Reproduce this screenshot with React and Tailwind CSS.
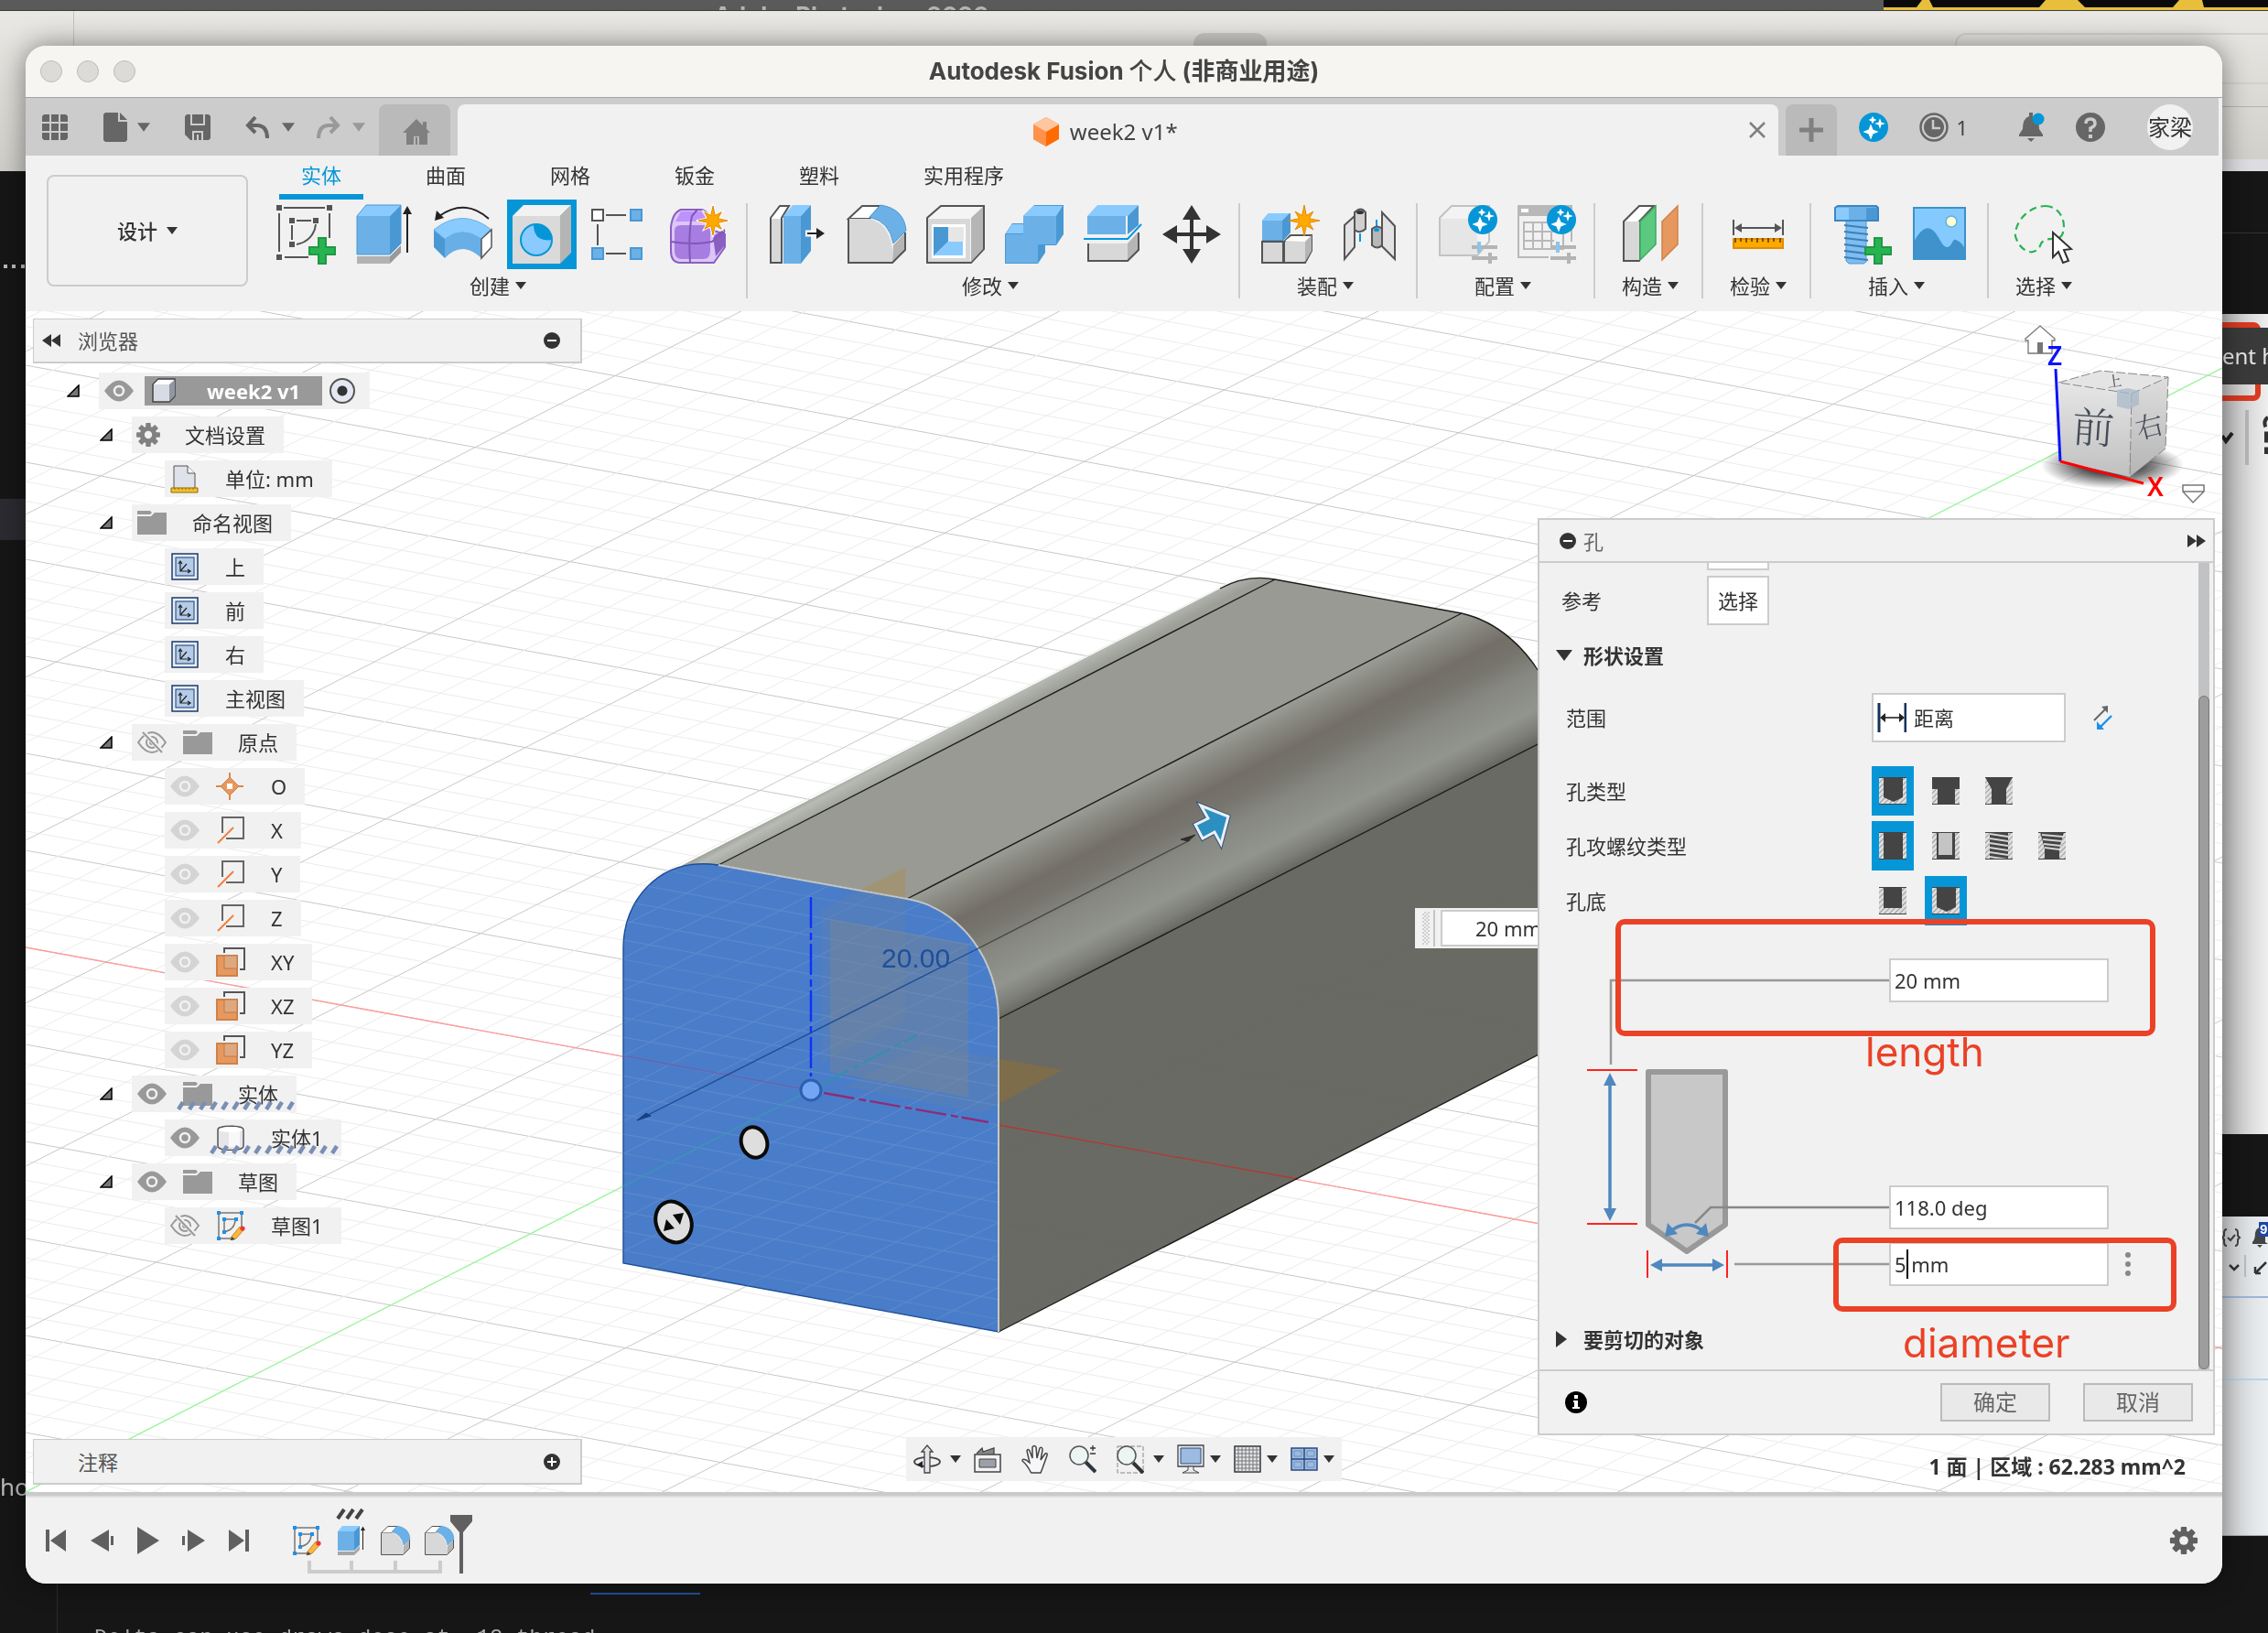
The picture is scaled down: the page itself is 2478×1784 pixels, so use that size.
import React, { useState } from "react";
import clsx from "clsx";

const RIBBON_TABS = ["实体", "曲面", "网格", "钣金", "塑料", "实用程序"];

/* ---------- helpers ---------- */

const starPoints = (cx, cy, outer, inner, n = 8) =>
  Array.from({ length: n * 2 }, (_, i) => {
    const r = i % 2 ? inner : i % 4 ? outer * 0.82 : outer;
    const a = (Math.PI * i) / n - Math.PI / 2;
    return `${(cx + r * Math.cos(a)).toFixed(1)},${(cy + r * Math.sin(a)).toFixed(1)}`;
  }).join(" ");

const Caret = ({ className = "h-2 w-3 text-[#333]" }) => (
  <svg viewBox="0 0 12 8" className={className} aria-hidden="true">
    <path d="M0 0H12L6 8Z" fill="currentColor" />
  </svg>
);

const Icon64 = ({ children }) => (
  <svg viewBox="0 0 64 64" className="size-16 overflow-visible" aria-hidden="true">
    {children}
  </svg>
);

const PlusMark = () => (
  <path
    d="M46 36h8v10h10v8H54v10h-8V54H36v-8h10z"
    fill="#27b352"
    stroke="#1d9a42"
    strokeWidth="2"
  />
);

const Sparkle = ({ cx, cy, r }) => (
  <g transform={`translate(${cx} ${cy}) scale(${r / 16})`}>
    <circle r="16" fill="#0696d7" />
    <path
      d="M-3-2l2 5 5 2-5 2-2 5-2-5-5-2 5-2zM7-8l1 3 3 1-3 1-1 3-1-3-3-1 3-1zM-1-11l1 2 2 1-2 1-1 2-1-2-2-1 2-1z"
      fill="#fff"
      stroke="#fff"
      strokeWidth="1.2"
    />
  </g>
);

/* ---------- ribbon icons ---------- */

const SketchIcon = () => (
  <Icon64>
    <g stroke="#555" strokeWidth="2" fill="none">
      <path d="M8 3H53M3 9V51M58 9V36M9 57H35M22 17H38M17 22V38M43 21C42 32 34 41 22 43" />
    </g>
    <path
      fill="#555"
      d="M0 0h6v6H0zM55 0h6v6h-6zM0 54h6v6H0zM14 14h6v6h-6zM40 14h6v6h-6zM14 40h6v6h-6z"
    />
    <PlusMark />
  </Icon64>
);

const ExtrudeIcon = () => (
  <Icon64>
    <path d="M2 12H38V54H2Z" fill="#6bb1e8" />
    <path d="M2 12L12 0H50L38 12Z" fill="#8acbff" />
    <path d="M38 12L50 0V42L38 54Z" fill="#4a98d3" />
    <path d="M2 12L12 0H50V42L38 54H2Z" fill="none" stroke="#4a98d3" strokeWidth="1" />
    <path d="M2 56H38V64H2Z" fill="#b2b2b2" />
    <path d="M38 56L50 44V52L38 64Z" fill="#999" />
    <path d="M57 8V52" stroke="#222" strokeWidth="2" />
    <path d="M57 1L62 10H52Z" fill="#222" />
  </Icon64>
);

const RevolveIcon = () => (
  <Icon64>
    <path d="M0 27L12 37V58L0 46Z" fill="#4a98d3" />
    <path d="M12 37Q31 22 52 37V58Q31 38 12 58Z" fill="#67afe6" />
    <path d="M0 27Q31 2 63 27L52 37Q31 22 12 37Z" fill="#8acbff" stroke="#68afe2" />
    <path d="M63 27V46L52 58V37Z" fill="#fff" stroke="#555" strokeWidth="1.5" />
    <path d="M60 15Q34-8 6 12" fill="none" stroke="#222" strokeWidth="2" />
    <path d="M1 17L3 6L11 14Z" fill="#222" />
  </Icon64>
);

const HoleIcon = () => (
  <Icon64>
    <path d="M0 12H52V64H0Z" fill="#dadada" />
    <path d="M0 12L12 0H64L52 12Z" fill="#f2f2f2" />
    <path d="M52 12L64 0V52L52 64Z" fill="#b5b5b5" />
    <circle cx="26" cy="38" r="17" fill="#8acbff" stroke="#0696d7" strokeWidth="2" />
    <path d="M23 21A17 17 0 0 1 43 38Q23 41 23 21Z" fill="#0696d7" />
  </Icon64>
);

const PatternIcon = () => (
  <Icon64>
    <path d="M16 11H38M7 21V44M16 53H38" stroke="#555" strokeWidth="2" />
    <path d="M1 5h12v12H1z" fill="#fff" stroke="#555" strokeWidth="2" />
    <path d="M43 5h12v12H43zM1 47h12v12H1zM43 47h12v12H43z" fill="#6bb1e8" stroke="#4a98d3" strokeWidth="2" />
  </Icon64>
);

const FormIcon = () => (
  <Icon64>
    <path
      d="M12 5H34Q44 6 48 28L60 32V46L48 63H10Q1 62 1 50V24Q3 8 12 5Z"
      fill="#dcc6f7"
      stroke="#8a5fc2"
      strokeWidth="2"
    />
    <path d="M47 34L60 26V44L50 56Z" fill="#8a5fc2" />
    <path d="M5 28Q5 22 12 22H36Q44 22 44 30V50Q44 59 36 59H13Q5 59 5 50Z" fill="#a87de2" />
    <path d="M12 7H34L42 18H6Z" fill="#bd92fa" />
    <path d="M1 40Q26 44 46 40L60 28M22 63Q20 30 24 12L30 5" fill="none" stroke="#8257b8" strokeWidth="2" />
    <polygon points={starPoints(47, 17, 18, 7)} fill="#ffa800" stroke="#fff" strokeWidth="1.5" />
    <polygon points={starPoints(47, 17, 16, 6)} fill="#ffa800" stroke="#e08c00" />
  </Icon64>
);

const PressPullIcon = () => (
  <Icon64>
    <path d="M2 14L12 1H22L14 14V63H2Z" fill="#fff" stroke="#555" strokeWidth="2" />
    <path d="M3 15H13V62H3Z" fill="#d8d8d8" />
    <path d="M16 12H35V64H16Z" fill="#6bb1e8" />
    <path d="M16 12L26 0H46L35 12Z" fill="#8acbff" />
    <path d="M35 12L46 0V50L35 64Z" fill="#4a98d3" />
    <path d="M40 31H53" stroke="#fff" strokeWidth="7" />
    <path d="M42 31H54" stroke="#222" strokeWidth="2" />
    <path d="M52 25L61 31L52 37Z" fill="#222" />
  </Icon64>
);

const FilletShape = () => (
  <>
    <path d="M1 15L16 1H36L24 15Z" fill="#fff" stroke="#555" strokeWidth="2" />
    <path d="M1 15H24Q45 20 49 48V63H1Z" fill="#d8d8d8" />
    <path d="M50 44L63 30V49L49 63Z" fill="#b5b5b5" />
    <path d="M1 15V63H49L63 49V30" fill="none" stroke="#555" strokeWidth="2" />
    <path d="M24 13L36 0Q62 4 64 28L50 42Q46 18 24 13Z" fill="#6bb1e8" stroke="#4a98d3" />
  </>
);

const FilletIcon = () => (
  <Icon64>
    <FilletShape />
  </Icon64>
);

const ShellIcon = () => (
  <Icon64>
    <path d="M1 14L16 1H63V48L49 63H1Z" fill="#f4f4f4" stroke="#555" strokeWidth="2" />
    <path d="M2 15H48V62H2Z" fill="#d8d8d8" />
    <path d="M49 14L62 2V48L49 62Z" fill="#b5b5b5" />
    <path d="M6 21H43V58H6Z" fill="#fff" />
    <path d="M8 24H24V40L8 56Z" fill="#4a98d3" />
    <path d="M24 40H40V55H8Z" fill="#8acbff" />
    <path d="M24 24H41V40H24Z" fill="#e6e6e6" />
  </Icon64>
);

const CombineIcon = () => (
  <Icon64>
    <path d="M0 32L8 20H20V12L32 0H64V32L56 44H44V52L36 64H0Z" fill="#4a98d3" />
    <path d="M1 32H20V12H56V43H36V63H1Z" fill="#6bb1e8" />
    <path d="M20 12L31 1H63L56 12ZM1 31L8 21H20V31Z" fill="#8acbff" />
  </Icon64>
);

const SplitIcon = () => (
  <Icon64>
    <path d="M4 12H46V32H4Z" fill="#6bb1e8" />
    <path d="M4 12L15 0H60L48 12Z" fill="#8acbff" />
    <path d="M48 12L60 0V22L48 32Z" fill="#4a98d3" />
    <path d="M0 37H48L63 21" fill="none" stroke="#0696e7" strokeWidth="2" />
    <path d="M5 42H48V60H5Z" fill="#d8d8d8" />
    <path d="M48 42L59 30V49L48 60Z" fill="#b5b5b5" />
    <path d="M5 42V61H48L60 49V30" fill="none" stroke="#555" strokeWidth="2" />
  </Icon64>
);

const MoveIcon = () => (
  <Icon64>
    <path d="M32 10V54M10 32H54" stroke="#333" strokeWidth="4" />
    <path d="M32 0L42 16H22ZM32 64L42 48H22ZM0 32L16 22V42ZM64 32L48 22V42Z" fill="#333" />
  </Icon64>
);

const AssembleIcon = () => (
  <Icon64>
    <path d="M1 17L8 9H32V30L24 39H1Z" fill="#4a98d3" />
    <path d="M1 17H23V38H1Z" fill="#6bb1e8" />
    <path d="M1 17L8 9H31L23 17Z" fill="#8acbff" />
    <path d="M1 40H24V63H1ZM25 40L32 33H55V50L48 63H25Z" fill="#d8d8d8" stroke="#555" strokeWidth="2" />
    <path d="M26 39L33 34H54L48 40Z" fill="#fff" />
    <path d="M48 40L55 33V50L48 62Z" fill="#b5b5b5" />
    <polygon points={starPoints(47, 17, 17, 6)} fill="#ffa800" stroke="#e08c00" />
  </Icon64>
);

const JointIcon = () => (
  <Icon64>
    <path d="M5 22L16 12V46L5 59Z" fill="#e2e2e2" stroke="#555" strokeWidth="2" />
    <path d="M16 8Q23 1 28 8V26Q22 32 16 27Z" fill="#d0d0d0" stroke="#555" strokeWidth="2" />
    <ellipse cx="22" cy="8" rx="4" ry="2" fill="#333" />
    <path d="M22 31V40M40 16V27" stroke="#0696e7" strokeWidth="2" />
    <path d="M46 8L60 23V59L46 45Z" fill="#e2e2e2" stroke="#555" strokeWidth="2" />
    <path d="M35 26Q41 21 46 26V44Q41 49 35 44Z" fill="#b8b8b8" stroke="#555" strokeWidth="2" />
    <ellipse cx="40" cy="27" rx="3" ry="2" fill="#0696e7" />
  </Icon64>
);

const SliderMarks = () => (
  <>
    <path d="M36 46H64M36 58H64M56 52V64" stroke="#b4b4b4" strokeWidth="4" />
    <path d="M44 40V52" stroke="#8cc4ee" strokeWidth="4" />
  </>
);

const ConfigBoxIcon = () => (
  <Icon64>
    <path d="M1 14L14 1H55V40L42 55H1Z" fill="#f3f3f3" stroke="#c2c2c2" strokeWidth="2" />
    <path d="M2 15H42V54H2Z" fill="#e6e6e6" />
    <SliderMarks />
    <Sparkle cx={48} cy={16} r={16} />
  </Icon64>
);

const ConfigTableIcon = () => (
  <Icon64>
    <path d="M1 1H59V40M1 1V57H34" fill="none" stroke="#b8b8b8" strokeWidth="2" />
    <path d="M0 0H60V12H0Z" fill="#b8b8b8" />
    <path d="M4 4h8v4H4z" fill="#fff" />
    <path d="M7 19H50V48H7ZM7 29H54M7 39H40M17 19V48M27 19V48M37 30V48" fill="none" stroke="#b8b8b8" strokeWidth="2" />
    <SliderMarks />
    <Sparkle cx={48} cy={16} r={16} />
  </Icon64>
);

const ConstructIcon = () => (
  <Icon64>
    <path d="M3 18L20 1H36L20 18V61H3Z" fill="#fff" stroke="#555" strokeWidth="2" />
    <path d="M4 18H20V60H4Z" fill="#d8d8d8" />
    <path d="M21 18L38 1V43L21 60Z" fill="#5bc97f" stroke="#3fa962" strokeWidth="1.5" />
    <path d="M45 18L62 1V43L45 60Z" fill="#e6985f" stroke="#cf8247" strokeWidth="1.5" />
  </Icon64>
);

const MeasureIcon = () => (
  <Icon64>
    <path d="M5 16V33M59 16V33M8 25H56" stroke="#555" strokeWidth="2" />
    <path d="M6 25L14 20V30ZM58 25L50 20V30Z" fill="#555" />
    <path d="M5 37H59V47H5Z" fill="#ffa800" stroke="#e08c00" strokeWidth="2" />
    <path d="M7 36v5M13 36v4M19 36v5M25 36v4M31 36v5M37 36v4M43 36v5M49 36v4M56 36v5" stroke="#4d3a00" strokeWidth="1.5" />
  </Icon64>
);

const InsertBoltIcon = () => (
  <Icon64>
    <path d="M15 16H37V62L34 64H18L15 61Z" fill="#7dbdf0" stroke="#4a98d3" />
    <path d="M3 3L6 1H48L50 3V17H3Z" fill="#6bb1e8" stroke="#3c86c2" strokeWidth="2" />
    <path d="M4 3H18V16H4Z" fill="#8acbff" />
    <path d="M37 3H49V16H37Z" fill="#4a98d3" />
    <path d="M13 22L39 25M13 29L39 32M13 36L39 39M13 43L37 46M13 50L37 53M13 57L39 60" stroke="#3c7fb8" strokeWidth="2" />
    <PlusMark />
  </Icon64>
);

const PictureIcon = () => (
  <Icon64>
    <path d="M3 3H59V59H3Z" fill="#84caff" />
    <path d="M3 40Q13 22 21 26C29 28 33 46 39 46C45 46 45 36 49 38Q55 40 59 48V59H3Z" fill="#3f92cc" />
    <circle cx="44" cy="18" r="6" fill="#ffffd2" stroke="#5fb0e6" strokeWidth="1.5" />
    <path d="M3 3H59V59H3Z" fill="none" stroke="#3c92cc" strokeWidth="2" />
  </Icon64>
);

const SelectIcon = () => (
  <Icon64>
    <path
      d="M34 1C48 1 57 16 53 30C50 42 36 32 29 42C24 58 6 52 1 34C0 18 16 1 34 1Z"
      fill="none"
      stroke="#27b352"
      strokeWidth="2.2"
      strokeDasharray="8 5"
    />
    <path d="M42 30V57L48 51L53 63L59 61L54 49L62 48Z" fill="#fff" stroke="#333" strokeWidth="2" />
  </Icon64>
);

const RIBBON_GROUPS = [
  {
    label: "创建",
    tools: [
      ["创建草图", SketchIcon],
      ["拉伸", ExtrudeIcon],
      ["旋转", RevolveIcon],
      ["孔", HoleIcon],
      ["阵列", PatternIcon],
      ["创建造型", FormIcon],
    ],
  },
  {
    label: "修改",
    tools: [
      ["推拉", PressPullIcon],
      ["圆角", FilletIcon],
      ["抽壳", ShellIcon],
      ["合并", CombineIcon],
      ["分割", SplitIcon],
      ["移动", MoveIcon],
    ],
  },
  { label: "装配", tools: [["新建零部件", AssembleIcon], ["联接", JointIcon]] },
  { label: "配置", tools: [["配置", ConfigBoxIcon], ["配置表", ConfigTableIcon]] },
  { label: "构造", tools: [["构造", ConstructIcon]] },
  { label: "检验", tools: [["测量", MeasureIcon]] },
  { label: "插入", tools: [["插入紧固件", InsertBoltIcon], ["插入图像", PictureIcon]] },
  { label: "选择", tools: [["选择", SelectIcon]] },
];

/* ---------- browser tree icons ---------- */

const Eye = ({ faded }) => (
  <svg viewBox="0 0 32 24" className="h-6 w-8" aria-hidden="true">
    <path d="M0 12Q16-11 32 12Q16 35 0 12Z" fill={faded ? "#d4d4d4" : "#999"} />
    <circle cx="16" cy="12" r="5" fill="none" stroke="#f1f1f1" strokeWidth="2.5" />
  </svg>
);

const EyeOff = () => (
  <svg viewBox="0 0 32 24" className="h-6 w-8" aria-hidden="true">
    <g fill="none" stroke="#999" strokeWidth="2">
      <path d="M1 12Q16-10 31 12Q16 34 1 12Z" />
      <circle cx="16" cy="12" r="6" />
      <circle cx="16" cy="12" r="2" />
    </g>
    <path d="M6 0L28 23" stroke="#f1f1f1" strokeWidth="5" />
    <path d="M6 1L27 23" stroke="#999" strokeWidth="2" />
  </svg>
);

const Folder = () => (
  <svg viewBox="0 0 32 26" className="h-[26px] w-8" aria-hidden="true">
    <path d="M0 0H14L16 2L14 4H0ZM0 6H15L19 2H32V26H0Z" fill="#999" />
  </svg>
);

const Gear = ({ className = "size-6 overflow-visible", color = "#808080" }) => (
  <svg viewBox="-13 -13 26 26" className={className} aria-hidden="true">
    <g fill={color}>
      {[0, 45, 90, 135].map((a) => (
        <rect key={a} x="-3" y="-14" width="6" height="28" rx="1" transform={`rotate(${a})`} />
      ))}
      <circle r="10" />
    </g>
    <circle r="4.5" fill="#f1f1f1" />
  </svg>
);

const CubeSmall = () => (
  <svg viewBox="0 0 32 28" className="h-7 w-8" aria-hidden="true">
    <path d="M1 7L7 1H25V20L19 26H1Z" fill="#d7dbe4" stroke="#444" strokeWidth="1.5" />
    <path d="M2 7L7 2H24L19 7Z" fill="#fff" />
    <path d="M19 7L25 2V19L19 25Z" fill="#8f97a5" />
  </svg>
);

const UnitsIcon = () => (
  <svg viewBox="0 0 32 32" className="size-8" aria-hidden="true">
    <path d="M4 2H19L27 10V27H4Z" fill="#dfe2ea" stroke="#555" />
    <path d="M19 2V10H27" fill="#fff" stroke="#555" />
    <path d="M1 26H30V31H1Z" fill="#f0c030" stroke="#946a00" />
    <path d="M5 26v2M9 26v2M13 26v2M17 26v2M21 26v2M25 26v2" stroke="#946a00" />
  </svg>
);

const ViewIcon = () => (
  <svg viewBox="0 0 32 32" className="size-8" aria-hidden="true">
    <rect x="2" y="2" width="28" height="28" fill="#e3edf8" stroke="#1d3a6b" strokeWidth="1.5" />
    <rect x="6" y="6" width="20" height="20" fill="#b4cce8" stroke="#1d3a6b" />
    <path d="M11 11V21H21M11 21L18 13M9 13L11 10L13 13M19 19L22 21L19 23" fill="none" stroke="#222" strokeWidth="1.2" />
  </svg>
);

const OriginIcon = () => (
  <svg viewBox="0 0 32 32" className="size-8" aria-hidden="true">
    <path d="M15 1V31M0 16H30" stroke="#dd8848" strokeWidth="2" />
    <path d="M15 6L25 16L15 26L5 16Z" fill="#e6985f" stroke="#cf8247" />
    <path d="M12 13h6v6h-6z" fill="#fff" />
  </svg>
);

const AxisIcon = () => (
  <svg viewBox="0 0 32 32" className="size-8" aria-hidden="true">
    <path d="M7 19V2H30V25H11" fill="none" stroke="#666" strokeWidth="2" />
    <path d="M2 30L19 13" stroke="#ee8040" strokeWidth="2" />
  </svg>
);

const PlaneIcon = () => (
  <svg viewBox="0 0 32 32" className="size-8" aria-hidden="true">
    <path d="M9 6V1H31V24H26" fill="none" stroke="#555" strokeWidth="2" />
    <path d="M1 9H23V31H1Z" fill="#e6985f" stroke="#cf8247" strokeWidth="2" />
    <path d="M9 9H23V23H9Z" fill="#e0a87f" stroke="#b97a50" />
  </svg>
);

const BodyIcon = () => (
  <svg viewBox="0 0 32 28" className="h-7 w-8" aria-hidden="true">
    <path d="M2 5C2 0 30 0 30 5V23C30 29 2 29 2 23Z" fill="#e6e6ea" stroke="#555" strokeWidth="1.5" />
    <path d="M14 6H26V24H14Z" fill="#f8f8f8" />
    <ellipse cx="16" cy="5" rx="13" ry="3" fill="#fff" />
  </svg>
);

const SketchShape = () => (
  <>
    <path d="M3 2H28V18M3 2V30H16M9 9H21M9 9V23M21 9Q21 20 9 23" fill="none" stroke="#777" strokeWidth="1.5" />
    <path fill="#1e90ea" d="M1 0h4v4H1zM26 0h4v4h-4zM1 28h4v4H1zM7 7h4v4H7zM20 7h4v4h-4zM7 21h4v4H7z" />
    <path d="M17 28L26 17L30 21L22 30L16 32Z" fill="#fcb63c" stroke="#b07818" strokeWidth=".8" />
    <path d="M16 32L17 28L21 31Z" fill="#444" />
    <circle cx="29" cy="19" r="2.6" fill="#ee3338" />
  </>
);

const SketchSmall = () => (
  <svg viewBox="0 0 32 32" className="size-8" aria-hidden="true">
    <SketchShape />
  </svg>
);

const TREE = [
  { label: "week2 v1", level: 0, open: true, eye: "on", icon: CubeSmall, root: true },
  { label: "文档设置", level: 1, open: true, icon: Gear },
  { label: "单位: mm", level: 2, icon: UnitsIcon },
  { label: "命名视图", level: 1, open: true, icon: Folder },
  { label: "上", level: 2, icon: ViewIcon },
  { label: "前", level: 2, icon: ViewIcon },
  { label: "右", level: 2, icon: ViewIcon },
  { label: "主视图", level: 2, icon: ViewIcon },
  { label: "原点", level: 1, open: true, eye: "off", icon: Folder },
  { label: "O", level: 2, eye: "faded", icon: OriginIcon },
  { label: "X", level: 2, eye: "faded", icon: AxisIcon },
  { label: "Y", level: 2, eye: "faded", icon: AxisIcon },
  { label: "Z", level: 2, eye: "faded", icon: AxisIcon },
  { label: "XY", level: 2, eye: "faded", icon: PlaneIcon },
  { label: "XZ", level: 2, eye: "faded", icon: PlaneIcon },
  { label: "YZ", level: 2, eye: "faded", icon: PlaneIcon },
  { label: "实体", level: 1, open: true, eye: "on", icon: Folder, hatched: true },
  { label: "实体1", level: 2, eye: "on", icon: BodyIcon, hatched: true },
  { label: "草图", level: 1, open: true, eye: "on", icon: Folder },
  { label: "草图1", level: 2, eye: "off", icon: SketchSmall },
];

const INDENTS = ["pl-[34px]", "pl-[70px]", "pl-[106px]"];

function TreeRow({ item }) {
  const NodeIcon = item.icon;
  return (
    <li className={clsx("flex h-10 items-center", INDENTS[item.level])}>
      {item.open ? (
        <button type="button" aria-label="折叠" className="w-[38px] pl-[3px]">
          <svg viewBox="0 0 14 14" className="size-3.5" aria-hidden="true">
            <path d="M13 1V13H1Z" fill="#777" stroke="#000" strokeWidth="1.5" />
          </svg>
        </button>
      ) : (
        <span className="w-[38px]" />
      )}
      <div className={clsx("relative flex h-10 items-center bg-[#f1f1f1] pl-1.5", item.root ? "pr-4" : "pr-5")}>
        {item.eye && (
          <button type="button" aria-label="可见性" className={item.root ? "mr-3" : "mr-[18px]"}>
            {item.eye === "off" ? <EyeOff /> : <Eye faded={item.eye === "faded"} />}
          </button>
        )}
        <span className={clsx("flex items-center gap-7", item.root && "h-8 bg-[#999] pr-6 pl-2 font-bold text-white")}>
          <NodeIcon />
          <span>{item.label}</span>
        </span>
        {item.root && (
          <input
            type="radio"
            aria-label="激活零部件"
            defaultChecked
            className="ml-2 size-7 appearance-none rounded-full border-2 border-[#555] bg-[radial-gradient(circle,#333_0_5px,#e4e8f2_6px)]"
          />
        )}
        {item.hatched && (
          <div className="absolute right-0 bottom-0.5 left-12 h-2.5 overflow-hidden">
            <svg className="h-2.5 w-full" aria-hidden="true">
              <rect width="100%" height="10" fill="url(#ticks)" />
            </svg>
          </div>
        )}
      </div>
    </li>
  );
}

/* ---------- title and tab bars ---------- */

function TitleBar() {
  return (
    <header className="flex h-[57px] items-center border-b border-[#a3a3a3] bg-[#f6f5f1] px-4">
      <div className="flex flex-1 gap-4">
        {["关闭", "最小化", "缩放"].map((name) => (
          <button key={name} type="button" aria-label={name} className="size-6 rounded-full border border-[#bcbbb8] bg-[#dcdbd8]" />
        ))}
      </div>
      <h1 className="font-['Inter','Noto_Sans_CJK_SC',sans-serif] text-[26px] font-bold text-[#444]">
        Autodesk Fusion<span className="mx-1.5 font-medium">个人</span>(非商业用途)
      </h1>
      <div className="flex-1" />
    </header>
  );
}

function TabBar() {
  return (
    <div className="mr-1 flex h-[63px] items-center bg-[#ccc] text-[#666]">
      <div className="flex w-[386px] items-center pl-[18px]">
        <button type="button" aria-label="数据面板">
          <svg viewBox="0 0 28 28" className="size-7">
            <path fill="currentColor" d="M2 0h6v8H0V2zM10 0h8v8h-8zM20 0h6l2 2v6h-8zM0 10h8v8H0zM10 10h8v8h-8zM20 10h8v8h-8zM0 20h8v8H2l-2-2zM10 20h8v8h-8zM20 20h8v6l-2 2h-6z" />
          </svg>
        </button>
        <button type="button" aria-label="文件" className="ml-[39px] flex items-center gap-[11px]">
          <svg viewBox="0 0 26 32" className="h-8 w-[26px]">
            <path fill="currentColor" d="M2 0H16V10H26V30L24 32H2L0 30V2ZM18 0L26 8H18Z" />
          </svg>
          <Caret className="h-2.5 w-3.5" />
        </button>
        <button type="button" aria-label="保存" className="ml-[38px]">
          <svg viewBox="0 0 28 28" className="size-7">
            <path fill="currentColor" d="M2 0H26L28 2V26L26 28H6L0 22V2Z" />
            <path fill="none" stroke="#ccc" strokeWidth="2" d="M7 0V11H21V0M9 28V19H19V28M14 22V28" />
          </svg>
        </button>
        <button type="button" aria-label="撤消" className="ml-[38px] flex items-center gap-3.5">
          <svg viewBox="0 0 26 24" className="h-6 w-[26px]">
            <path fill="none" stroke="currentColor" strokeWidth="4" d="M11 1L3 10L11 18M3 10H14Q24 11 24 24" />
          </svg>
          <Caret className="h-2.5 w-3.5" />
        </button>
        <button type="button" aria-label="重做" className="ml-6 flex items-center gap-[13px] text-[#999]">
          <svg viewBox="0 0 26 24" className="h-6 w-[26px]">
            <path fill="none" stroke="currentColor" strokeWidth="4" d="M15 1L23 10L15 18M23 10H12Q2 11 2 24" />
          </svg>
          <Caret className="h-2.5 w-3.5" />
        </button>
      </div>
      <button type="button" aria-label="主页" className="flex h-14 w-[78px] items-center justify-center self-end rounded-t-lg bg-[#bababa] pt-1 pl-1 text-[#808080]">
        <svg viewBox="0 0 30 28" className="h-7 w-[30px]">
          <path fill="currentColor" d="M15 0L22 7V3H26V11L30 15H27V28H18V19H12V28H4V15H0ZM14 20H16V28H14Z" />
        </svg>
      </button>
      <div className="ml-2 flex h-14 flex-1 items-center self-end rounded-t-lg bg-[#f1f1f1] pr-3.5">
        <div className="flex flex-1 items-center justify-center gap-3 pt-1 pl-1 text-2xl text-[#444]">
          <svg viewBox="0 0 28 32" className="h-8 w-7" aria-hidden="true">
            <path d="M14 0L28 8V24L14 32L0 24V8Z" fill="#ff6b00" />
            <path d="M0 8L14 16V32L0 24Z" fill="#ff924a" />
            <path d="M14 0L28 8L14 16L0 8Z" fill="#ffc6a0" />
          </svg>
          <span>week2 v1*</span>
        </div>
        <button type="button" aria-label="关闭文档">
          <svg viewBox="0 0 18 18" className="size-[18px]">
            <path d="M1 1L17 17M17 1L1 17" stroke="#808080" strokeWidth="2.5" />
          </svg>
        </button>
      </div>
      <button type="button" aria-label="新建设计" className="ml-2 flex h-14 w-14 items-center justify-center self-end rounded-t-lg bg-[#bababa] text-[#808080]">
        <svg viewBox="0 0 26 26" className="size-[26px]">
          <path d="M13 0V26M0 13H26" stroke="currentColor" strokeWidth="5" />
        </svg>
      </button>
      <div className="flex items-center pr-7 pl-6">
        <button type="button" aria-label="助手">
          <svg viewBox="-16 -16 32 32" className="size-8">
            <Sparkle cx={0} cy={0} r={16} />
          </svg>
        </button>
        <button type="button" aria-label="作业状态" className="ml-[34px] flex items-center gap-2 text-[22px] text-[#444]">
          <svg viewBox="0 0 32 32" className="size-8">
            <circle cx="16" cy="16" r="14.5" fill="none" stroke="#666" strokeWidth="2.5" />
            <circle cx="16" cy="16" r="11" fill="#666" />
            <path d="M15 8V17H23" fill="none" stroke="#ccc" strokeWidth="2.5" />
          </svg>
          <span>1</span>
        </button>
        <button type="button" aria-label="通知" className="ml-14">
          <svg viewBox="0 0 28 32" className="h-8 w-7">
            <path fill="#666" d="M11 0H15V4Q22 6 22 18L26 24V26H0V24L4 18Q4 6 11 4ZM9 28H17L13 32Z" />
            <circle cx="21" cy="7" r="6.5" fill="#0696d7" />
          </svg>
        </button>
        <button type="button" aria-label="帮助" className="ml-[34px]">
          <svg viewBox="0 0 32 32" className="size-8">
            <circle cx="16" cy="16" r="16" fill="#666" />
            <path d="M11 12Q11 7 16 7Q21 7 21 12Q21 15 16 17V21" fill="none" stroke="#ccc" strokeWidth="3.5" />
            <path d="M14 24h4v4h-4z" fill="#ccc" />
          </svg>
        </button>
        <button type="button" className="ml-[46px] flex size-[50px] items-center justify-center rounded-full bg-[#f1f1f1] text-2xl whitespace-nowrap text-[#333]">
          家梁
        </button>
      </div>
    </div>
  );
}

function Ribbon() {
  const [tab, setTab] = useState("实体");
  return (
    <div className="flex h-[170px] bg-[#f1f1f1]">
      <button type="button" className="mt-[21px] ml-[23px] flex h-[122px] w-[220px] items-center justify-center gap-2.5 rounded-lg border-2 border-[#ccc] text-[22px] font-medium">
        设计 <Caret />
      </button>
      <div className="ml-5 flex flex-col">
        <nav className="flex gap-11 pl-3.5">
          {RIBBON_TABS.map((name) => (
            <button
              key={name}
              type="button"
              onClick={() => setTab(name)}
              className={clsx(
                "flex h-12 items-center border-b-[6px] px-6 whitespace-nowrap",
                tab === name ? "border-[#0696d7] text-[#0696d7]" : "border-transparent"
              )}
            >
              {name}
            </button>
          ))}
        </nav>
        <div className="flex pt-1">
          {RIBBON_GROUPS.map((group, i) => (
            <div
              key={group.label}
              className={clsx(
                "flex h-[104px] min-w-[118px] flex-col items-center pr-2",
                i > 0 && "border-l-2 border-[#ccc] pl-3"
              )}
            >
              <div className="flex">
                {group.tools.map(([name, ToolIcon]) => (
                  <button key={name} type="button" aria-label={name} className="flex h-[68px] w-[86px] items-center justify-center">
                    {name === "孔" ? (
                      <span className="flex size-[76px] shrink-0 items-center justify-center bg-[#0696d7]">
                        <ToolIcon />
                      </span>
                    ) : (
                      <ToolIcon />
                    )}
                  </button>
                ))}
              </div>
              <button type="button" className={clsx("mt-1.5 flex items-center gap-1.5 leading-8", group.tools.length > 1 && "pr-2.5")}>
                {group.label} <Caret />
              </button>
            </div>
          ))}
        </div>
      </div>
    </div>
  );
}

/* ---------- 3D canvas ---------- */

const GRID_A = Array.from({ length: 84 }, (_, i) => i - 55);
const GRID_B = Array.from({ length: 74 }, (_, i) => i - 38);

function GridLines() {
  return (
    <>
      {GRID_A.map((n) => {
        const y = 1035 + n * 21.2;
        return <line key={n} x1="28" x2="2428" y1={y} y2={y + 438} stroke={n % 5 ? "#ececec" : "#c8c8c8"} />;
      })}
      {GRID_B.map((n) => {
        const y = 1630 + n * 35.6;
        return <line key={n} x1="28" x2="2428" y1={y} y2={y - 1228} stroke={n % 5 ? "#ececec" : "#c8c8c8"} />;
      })}
    </>
  );
}

const FRONT_FACE =
  "M681 1380V1035C681 985 718 940 776 944L785 945L991 982C1050 992 1091 1050 1091 1113V1455Z";

function ModelCanvas() {
  return (
    <svg
      viewBox="28 340 2400 1290"
      preserveAspectRatio="xMidYMid slice"
      className="absolute inset-0 h-full w-full"
      aria-label="模型视图"
    >
      <defs>
        <pattern id="ticks" width="12" height="10" patternUnits="userSpaceOnUse">
          <path d="M3 9L8 1" stroke="#7a8eb5" strokeWidth="4.5" />
        </pattern>
        <linearGradient id="fillet" gradientUnits="userSpaceOnUse" x1="991" y1="982" x2="1065" y2="1126">
          <stop offset="0" stopColor="#9b9c95" />
          <stop offset="0.08" stopColor="#8d8e86" />
          <stop offset="0.28" stopColor="#736f68" />
          <stop offset="0.4" stopColor="#76746c" />
          <stop offset="0.56" stopColor="#858780" />
          <stop offset="0.8" stopColor="#92958e" />
          <stop offset="0.92" stopColor="#7d7f78" />
          <stop offset="1" stopColor="#6a6a62" />
        </linearGradient>
        <linearGradient id="edge" gradientUnits="userSpaceOnUse" x1="750" y1="938" x2="764" y2="964">
          <stop offset="0" stopColor="#8c9088" />
          <stop offset="0.4" stopColor="#b7bbb3" />
          <stop offset="1" stopColor="#9c9e97" />
        </linearGradient>
        <clipPath id="side">
          <path d="M1091 1240L1800 880V1091L1091 1455Z" />
        </clipPath>
        <clipPath id="front">
          <path d={FRONT_FACE} />
        </clipPath>
      </defs>

      <rect x="28" y="340" width="2400" height="1290" fill="#fff" />
      <GridLines />
      <path d="M28 1035L2428 1473" stroke="#ff9c9c" strokeWidth="1.3" />
      <path d="M28 1630L2428 402" stroke="#98fb98" strokeWidth="1.3" />

      {/* extruded body */}
      <path d="M744 946L1333 643Q1362 627 1393 633L785 945Z" fill="url(#edge)" />
      <path d="M785 945L1393 633L1597 670L991 982Z" fill="#999a93" />
      <path d="M991 982L1597 670C1660 682 1700 750 1700 803L1091 1113C1091 1050 1050 992 991 982Z" fill="url(#fillet)" />
      <path d="M1091 1113L1800 752V1091L1091 1455Z" fill="#6a6a64" />
      <g clipPath="url(#side)" opacity="0.08" className="mix-blend-multiply">
        <GridLines />
      </g>
      <path d="M1091 1229L1418 1288" stroke="#b03a34" strokeWidth="1.3" />
      <path
        d="M785 945L1393 633M991 982L1597 670M1091 1113L1800 752M1091 1455L1800 1091M1333 643Q1362 627 1393 633L1597 670C1640 680 1668 712 1682 735"
        fill="none"
        stroke="#1c1c1a"
        strokeWidth="1.4"
      />
      <path d="M898 993L989 948V1115L898 1161Z" fill="#b08a3c" opacity="0.35" />
      <path d="M922 1187L1011 1142L1160 1169L1072 1216Z" fill="#96702a" opacity="0.45" />

      {/* selected face */}
      <path d={FRONT_FACE} fill="#4a7dc9" stroke="#1c4f96" strokeWidth="1.4" />
      <path d="M785 945L991 982C1050 992 1091 1050 1091 1113V1455" fill="none" stroke="#c6c8c6" strokeWidth="2" />
      <g clipPath="url(#front)">
        <g opacity="0.12" className="mix-blend-multiply">
          <GridLines />
        </g>
        <path d="M898 993L989 948V1115L898 1161ZM922 1187L1011 1142L1160 1169L1072 1216Z" fill="#868880" opacity="0.14" />
        <path d="M907 1004L1058 1031V1199L907 1171Z" fill="#868880" opacity="0.34" />
        <path d="M640 1146L885 1191" stroke="#6b62ad" strokeWidth="1.3" />
        <path d="M640 1317L885 1191" stroke="#3896b4" strokeWidth="1.3" />
      </g>
      <path d="M886 980V1176" stroke="#0a32ff" strokeWidth="2.4" strokeDasharray="34 5 8 4" />
      <path d="M900 1194L1080 1226" stroke="#8c2d78" strokeWidth="2.4" strokeDasharray="34 5 8 4" />
      <path d="M897 1185L1002 1131" stroke="#3290aa" strokeWidth="2" strokeDasharray="34 5 8 4" />
      <path d="M700 1222L1069 1036" stroke="#1c4b92" strokeWidth="1.3" />
      <path d="M1069 1036L1300 918" stroke="#45453f" strokeWidth="1.3" />
      <path d="M696 1224L706 1216L711 1219Z" fill="#163f85" stroke="#163f85" />
      <path d="M1306 912L1290 917L1298 919Z" fill="#2c2c28" stroke="#2c2c28" />
      <text x="963" y="1057" className="font-['Liberation_Sans',sans-serif] text-[30px]" fill="#1f4f9c">
        20.00
      </text>
      <circle cx="886" cy="1191" r="11" fill="#74a5f4" stroke="#2b5fb0" strokeWidth="3" />
      <g fill="#dedede" stroke="#0a0a0a" strokeWidth="4">
        <ellipse cx="824" cy="1248" rx="14" ry="17" transform="rotate(-20 824 1248)" />
        <ellipse cx="736" cy="1335" rx="19" ry="23" transform="rotate(-25 736 1335)" />
      </g>
      <path d="M735 1327L747 1325L743 1338ZM725 1345L728 1332L737 1342Z" fill="#0a0a0a" />
      <path
        d="M1342 892L1312 880L1320 894L1306 901L1314 916L1327 909L1334 922Z"
        fill="#2b8fc2"
        stroke="#33537e"
        strokeWidth="5"
      />
      <path
        d="M1342 892L1312 880L1320 894L1306 901L1314 916L1327 909L1334 922Z"
        fill="#2b8fc2"
        stroke="#eceff2"
        strokeWidth="3"
      />
    </svg>
  );
}

function ViewCube() {
  return (
    <svg viewBox="2200 348 220 218" className="h-[218px] w-[220px]" aria-label="ViewCube">
      <defs>
        <radialGradient id="cubeShadow">
          <stop offset="0.4" stopColor="#000" stopOpacity="0.7" />
          <stop offset="1" stopColor="#000" stopOpacity="0" />
        </radialGradient>
        <linearGradient id="cubeFront" x1="0" y1="0" x2="0" y2="1">
          <stop offset="0" stopColor="#e6e6e6" />
          <stop offset="1" stopColor="#c0c0c0" />
        </linearGradient>
        <linearGradient id="cubeRight" x1="0" y1="0" x2="0" y2="1">
          <stop offset="0" stopColor="#dedede" />
          <stop offset="1" stopColor="#b4b4b4" />
        </linearGradient>
      </defs>
      <path d="M2213 370L2229 356L2245 370V372H2242V386H2216V372H2213Z" fill="#fff" stroke="#777" strokeWidth="1.3" />
      <path d="M2226 374h6v12h-6z" fill="#777" />
      <ellipse cx="2308" cy="508" rx="78" ry="26" fill="url(#cubeShadow)" />
      <path d="M2249 418L2295 405L2369 412L2329 430Z" fill="#e4e4e4" />
      <path d="M2249 418L2329 430L2327 521L2251 504Z" fill="url(#cubeFront)" />
      <path d="M2329 430L2369 412L2366 490L2327 521Z" fill="url(#cubeRight)" />
      <path
        d="M2249 418L2295 405L2369 412L2329 430ZM2329 430L2327 521M2369 412L2366 490L2327 521"
        fill="none"
        stroke="#888"
        strokeDasharray="10 3"
      />
      <path d="M2313 426L2325 424L2337 427V442L2326 447L2313 444Z" fill="#aab8ca" opacity="0.75" />
      <g fill="#454c58" className="font-['Noto_Serif_CJK_SC','Noto_Sans_CJK_SC',serif]">
        <text x="2264" y="484" className="text-[46px] font-light" transform="rotate(4 2287 468)">前</text>
        <text x="2334" y="477" className="text-[30px] font-light" transform="rotate(-14 2348 468)">右</text>
        <text x="2302" y="422" className="text-[16px]" transform="rotate(-8 2312 416)">上</text>
      </g>
      <path d="M2246 403L2251 504" stroke="#0b12ff" strokeWidth="3" />
      <path d="M2251 504L2342 528" stroke="#f00" strokeWidth="3" />
      <g className="font-['Noto_Sans',sans-serif] text-[28px] font-semibold">
        <text x="2237" y="399" fill="#0b12ff">Z</text>
        <text x="2346" y="542" fill="#f00">X</text>
      </g>
      <path d="M2385 530H2408V537L2396 549L2385 537ZM2385 537H2408" fill="#fff" stroke="#777" strokeWidth="1.5" />
    </svg>
  );
}

/* ---------- navigation bar ---------- */

const navSvg = (children) => (
  <svg viewBox="0 0 30 32" className="h-8 w-[30px]" aria-hidden="true">
    {children}
  </svg>
);

const NAV_ITEMS = [
  {
    name: "动态观察",
    menu: true,
    icon: navSvg(
      <>
        <ellipse cx="15" cy="19" rx="14" ry="5" fill="none" stroke="#444" strokeWidth="1.8" />
        <path d="M12 31V8H9L15 1L21 8H18V31Z" fill="#e3e5ea" stroke="#444" strokeWidth="1.3" />
        <path d="M4 22L10 18V26Z" fill="#222" />
      </>
    ),
  },
  {
    name: "观察方向",
    icon: navSvg(
      <>
        <path d="M3 10L9 4L10 8L22 4V11" fill="#888" stroke="#444" strokeWidth="1.3" />
        <path d="M1 11H29V30H1Z" fill="#f2f2f2" stroke="#444" strokeWidth="1.5" />
        <path d="M6 16H24V25H6Z" fill="#9ba0aa" stroke="#444" />
      </>
    ),
  },
  {
    name: "平移",
    icon: navSvg(
      <path
        d="M10 30Q6 22 1 18Q1 15 5 17L9 20L6 7Q7 4 9 7L12 15L12 3Q14 0 16 3L17 15L20 4Q23 2 23 6L21 17L26 10Q29 9 28 12L23 26L21 31H11Z"
        fill="#f7f7f9"
        stroke="#444"
        strokeWidth="1.5"
      />
    ),
  },
  {
    name: "缩放",
    icon: navSvg(
      <>
        <path d="M18 19L29 30" stroke="#2e3640" strokeWidth="4" />
        <circle cx="11" cy="12" r="10" fill="#ecf5f3" stroke="#555" strokeWidth="1.5" />
        <path d="M26 1V7M23 4H29M23 10H29" stroke="#333" strokeWidth="1.3" />
      </>
    ),
  },
  {
    name: "窗口缩放",
    menu: true,
    icon: navSvg(
      <>
        <path d="M1 2H29V31H1Z" fill="none" stroke="#888" strokeDasharray="5 2" />
        <path d="M18 20L29 31" stroke="#333" strokeWidth="4" />
        <circle cx="11" cy="12" r="10" fill="#ecf5f3" stroke="#555" strokeWidth="1.5" />
      </>
    ),
  },
  {
    name: "显示设置",
    menu: true,
    tight: true,
    icon: navSvg(
      <>
        <path d="M1 1H29V24H1Z" fill="#e9ebef" stroke="#444" strokeWidth="1.3" />
        <path d="M4 4H26V21H4Z" fill="#9dbbe0" stroke="#2c4a80" />
        <path d="M12 24H18V28L24 31H6L12 28Z" fill="#e9ebef" stroke="#444" />
      </>
    ),
  },
  {
    name: "栅格和捕捉",
    menu: true,
    tight: true,
    icon: navSvg(
      <>
        <path d="M1 2H29V30H1Z" fill="#e3e5ea" stroke="#333" strokeWidth="1.5" />
        <path d="M5 2V30M9 2V30M13 2V30M17 2V30M21 2V30M25 2V30M1 6H29M1 10H29M1 14H29M1 18H29M1 22H29M1 26H29" stroke="#777" />
      </>
    ),
  },
  {
    name: "视口",
    menu: true,
    tight: true,
    icon: navSvg(
      <>
        <path d="M1 4H15V16H1ZM15 4H29V16H15ZM1 16H15V28H1ZM15 16H29V28H15Z" fill="#9dbbe0" stroke="#2c4a80" strokeWidth="1.5" />
        <path d="M4 7H12V13H4ZM18 7H26V13H18ZM4 19H12V25H4ZM18 19H26V25H18Z" fill="none" stroke="#6d8fc0" />
      </>
    ),
  },
];

function NavBar() {
  return (
    <div className="absolute bottom-3 left-1/2 flex h-12 -translate-x-1/2 items-center gap-3.5 bg-[#f1f1f1] px-2">
      {NAV_ITEMS.map((item) => (
        <button
          key={item.name}
          type="button"
          aria-label={item.name}
          className={clsx("flex items-center", item.tight ? "gap-1.5" : "gap-2.5", !item.menu && "mr-2")}
        >
          {item.icon}
          {item.menu && <Caret />}
        </button>
      ))}
    </div>
  );
}

/* ---------- hole dialog ---------- */

const HatchDefs = () => (
  <svg className="absolute size-0" aria-hidden="true">
    <defs>
      <pattern id="hatch" width="4" height="4" patternUnits="userSpaceOnUse" patternTransform="rotate(45)">
        <rect width="4" height="4" fill="#dedede" />
        <path d="M0 0V4" stroke="#8a8a8a" strokeWidth="1.6" />
      </pattern>
    </defs>
  </svg>
);

const HOLE_SHAPES = {
  simple: <path d="M5 0H26V22L16 27L5 22Z" fill="#444" />,
  counterbore: <path d="M0 0H30V13H25V30H6V13H0Z" fill="#444" />,
  countersink: <path d="M0 0H30L23 13V30H7V13Z" fill="#444" />,
  plain: <path d="M5 0H26V30H5Z" fill="#444" />,
  clearance: (
    <>
      <path d="M5 0H25V30H5Z" fill="#444" />
      <path d="M7 0H22V25H7Z" fill="#c4c4c4" />
    </>
  ),
  tapped: (
    <>
      <path d="M5 0H25V30H5Z" fill="#444" />
      <path d="M5 2L25 5M5 7L25 10M5 12L25 15M5 17L25 20M5 22L25 25M5 27L25 30" stroke="#d4d4d4" strokeWidth="2" />
    </>
  ),
  taper: (
    <>
      <path d="M2 0H28L23 18V30H7V18Z" fill="#444" />
      <path d="M4 3L27 5M5 8L26 10M6 13L25 15M7 17L23 19" stroke="#d4d4d4" strokeWidth="2" />
    </>
  ),
  flat: <path d="M5 0H25V23H5Z" fill="#444" />,
};

function ShapeRow({ label, options, initial }) {
  const [value, setValue] = useState(initial);
  return (
    <div className="flex h-[54px] items-center pl-[29px]">
      <span className="w-[334px]">{label}</span>
      <div role="group" aria-label={label} className="flex gap-3">
        {options.map((name) => (
          <button
            key={name}
            type="button"
            aria-label={name}
            aria-pressed={value === name}
            onClick={() => setValue(name)}
            className={clsx("flex h-[54px] w-[46px] items-center justify-center", value === name && "bg-[#0696d7]")}
          >
            <svg viewBox="0 0 30 30" className="size-[30px]">
              <rect width="30" height="30" fill="url(#hatch)" />
              {HOLE_SHAPES[name]}
              <path d="M0 .5H30M0 29.5H30" stroke="#444" />
            </svg>
          </button>
        ))}
      </div>
    </div>
  );
}

const DrillDiagram = () => (
  <svg viewBox="1711 1011 353 400" className="h-[400px] w-[353px] shrink-0" aria-hidden="true">
    <path d="M1760 1163V1071H2064M1895 1381H2064" fill="none" stroke="#999" strokeWidth="2.5" />
    <path d="M1801 1171H1885V1338L1843 1367L1801 1338Z" fill="#c8c8c8" stroke="#999" strokeWidth="6" strokeLinejoin="round" />
    <path d="M1852 1336L1869 1319H2064" fill="none" stroke="#888" strokeWidth="2.5" />
    <path d="M1734 1169H1789M1734 1337H1789M1800 1366V1396M1887 1366V1396" stroke="#f22" strokeWidth="2" />
    <g fill="none" stroke="#4f88bf" strokeWidth="3.5">
      <path d="M1759 1180V1326M1811 1382H1876M1824 1346Q1843 1330 1862 1346" />
    </g>
    <path
      d="M1759 1172L1766 1186H1752ZM1759 1334L1766 1320H1752ZM1803 1382L1816 1375V1389ZM1884 1382L1871 1375V1389ZM1819 1351L1822 1336L1833 1348ZM1867 1351L1864 1336L1853 1348Z"
      fill="#4f88bf"
    />
  </svg>
);

const fieldClass = "h-12 w-60 border-2 border-[#ccc] bg-white px-1 text-[22px] text-[#333] outline-none";

function HoleDialog() {
  return (
    <section aria-label="孔" className="w-[740px] bg-[#f1f1f1] text-[22px] leading-7">
      <HatchDefs />
      <div className="flex h-[49px] items-center border-2 border-[#ccc] pr-2 pl-[22px] text-[#666]">
        <CircleButton sign="minus" name="折叠" />
        <h2 className="ml-2">孔</h2>
        <button type="button" aria-label="停靠" className="ml-auto">
          <svg viewBox="0 0 20 14" className="h-3.5 w-5">
            <path d="M0 0L10 7L0 14ZM10 0L20 7L10 14Z" fill="#333" />
          </svg>
        </button>
      </div>

      <div className="relative flex border-x-2 border-[#ccc]">
        <div className="flex-1">
          <div className="ml-[183px] h-2 w-[68px] border-2 border-t-0 border-[#ccc] bg-white" />
          <div className="mt-1.5 flex h-[54px] items-center pl-6">
            <span className="w-[159px]">参考</span>
            <button type="button" className="h-[54px] w-[68px] border-2 border-[#ccc] bg-white whitespace-nowrap">
              选择
            </button>
          </div>
          <button type="button" className="flex h-[66px] items-center gap-3 pl-[18px] font-bold">
            <Caret className="h-3 w-[18px] text-[#333]" /> 形状设置
          </button>
          <div className="mt-2 flex h-[54px] items-center pl-[29px]">
            <label htmlFor="extent" className="w-[334px]">
              范围
            </label>
            <div className="relative">
              <select id="extent" className="h-[54px] w-[212px] appearance-none border-2 border-[#ccc] bg-white pl-11">
                <option>距离</option>
              </select>
              <svg viewBox="0 0 32 32" className="pointer-events-none absolute top-[11px] left-1.5 size-8" aria-hidden="true">
                <path d="M2 0V32M31 0V32" stroke="#14305c" strokeWidth="3" />
                <path d="M6 16H27" stroke="#222" strokeWidth="1.6" />
                <path d="M3 16L9 11V21ZM30 16L24 11V21Z" fill="#222" />
              </svg>
            </div>
            <button type="button" aria-label="反转方向" className="ml-[30px]">
              <svg viewBox="0 0 22 28" className="h-7 w-[22px]">
                <path d="M1 17L13 5" stroke="#666" strokeWidth="2" />
                <path d="M16 1V9L9 2Z" fill="#666" />
                <path d="M20 12L8 24" stroke="#1e90ea" strokeWidth="2.4" />
                <path d="M4 27V18L12 27Z" fill="#1e90ea" />
              </svg>
            </button>
          </div>
          <div className="flex flex-col gap-1.5 pt-[26px]">
            <ShapeRow label="孔类型" options={["simple", "counterbore", "countersink"]} initial="simple" />
            <ShapeRow label="孔攻螺纹类型" options={["plain", "clearance", "tapped", "taper"]} initial="plain" />
            <ShapeRow label="孔底" options={["flat", "simple"]} initial="simple" />
          </div>

          <div className="flex pl-[29px]">
            <DrillDiagram />
            <div className="flex flex-col">
              <input aria-label="深度" defaultValue="20 mm" className={clsx(fieldClass, "mt-9")} />
              <input aria-label="刀尖角度" defaultValue="118.0 deg" className={clsx(fieldClass, "mt-[200px]")} />
              <div className="relative mt-3.5 flex items-center">
                <input aria-label="直径" defaultValue="5 mm" className={fieldClass} />
                <div className="absolute top-2 left-[19px] h-8 w-0.5 bg-black" />
                <button type="button" aria-label="更多" className="ml-[18px]">
                  <svg viewBox="0 0 6 26" className="h-[26px] w-1.5">
                    <circle cx="3" cy="3" r="3" fill="#888" />
                    <circle cx="3" cy="13" r="3" fill="#888" />
                    <circle cx="3" cy="23" r="3" fill="#888" />
                  </svg>
                </button>
              </div>
            </div>
          </div>
          <button type="button" className="mt-[18px] flex h-[67px] items-center gap-[18px] pl-[18px] font-bold">
            <svg viewBox="0 0 12 18" className="h-[18px] w-3" aria-hidden="true">
              <path d="M0 0L12 9L0 18Z" fill="#333" />
            </svg>
            要剪切的对象
          </button>
        </div>
        <div className="mr-1 flex w-3 flex-col bg-[#c1c2c3] pt-[145px]">
          <div className="flex-1 rounded-full border border-[#777] bg-[#9d9d9d]" />
        </div>

        {/* markup notes */}
        <div className="pointer-events-none absolute top-[389px] left-[83px] h-32 w-[590px] rounded-[10px] border-[6px] border-[#eb4126]" />
        <div className="pointer-events-none absolute top-[737px] left-[321px] h-[81px] w-[375px] rounded-[10px] border-[6px] border-[#eb4126]" />
        <p className="absolute top-[512px] left-[356px] font-['Inter',sans-serif] text-[44px] leading-none text-[#eb4126]">length</p>
        <p className="absolute top-[830px] left-[397px] font-['Inter',sans-serif] text-[44px] leading-none text-[#eb4126]">diameter</p>
      </div>

      <div className="flex h-[72px] items-center border-2 border-[#ccc] pr-[22px] pl-7">
        <svg viewBox="0 0 24 24" className="size-6" aria-label="信息">
          <circle cx="12" cy="12" r="12" fill="#000" />
          <path d="M10 4h4v4h-4zM9 10h5v7h2v2H8v-2h2v-5H9z" fill="#fff" />
        </svg>
        <div className="ml-auto flex gap-9 text-2xl text-[#666]">
          <button type="button" className="h-[42px] w-[120px] border-2 border-[#bbb] bg-[#e9e9e9]">确定</button>
          <button type="button" className="h-[42px] w-[120px] border-2 border-[#bbb] bg-[#e9e9e9]">取消</button>
        </div>
      </div>
    </section>
  );
}

function CircleButton({ sign, name }) {
  return (
    <button type="button" aria-label={name}>
      <svg viewBox="0 0 18 18" className="size-[18px]">
        <circle cx="9" cy="9" r="9" fill="#333" />
        <path d={sign === "plus" ? "M4 9H14M9 4V14" : "M4 9H14"} stroke="#fff" strokeWidth="2" />
      </svg>
    </button>
  );
}

/* ---------- timeline ---------- */

const PLAYBACK = [
  ["跳到开头", "M0 0h4v24H0zM22 0V24L5 12Z"],
  ["上一步", "M19 0V24L-1 12ZM21 7h3v10h-3z"],
  ["播放", "M0-3L24 12L0 27Z"],
  ["下一步", "M-1 7h3v10h-3zM5 0V24L24 12Z"],
  ["跳到末尾", "M0 0V24L17 12ZM18 0h4v24h-4z"],
];

function Timeline() {
  return (
    <footer className="flex h-[94px] items-center bg-[#f1f1f1] pr-7 pl-[22px] text-[#606060]">
      <div className="flex gap-[26px]">
        {PLAYBACK.map(([name, d]) => (
          <button key={name} type="button" aria-label={name}>
            <svg viewBox="0 0 24 24" className="size-6 overflow-visible">
              <path d={d} fill="currentColor" />
            </svg>
          </button>
        ))}
      </div>
      <svg viewBox="316 1640 204 84" className="ml-[42px] h-[84px] w-[204px]" aria-label="时间轴">
        <path d="M338 1704V1716H481V1704M384 1704V1716M432 1704V1716" fill="none" stroke="#ccc" strokeWidth="4" />
        <path d="M369 1658L376 1648M379 1658L386 1648M389 1658L396 1648" stroke="#444" strokeWidth="4" />
        <g transform="translate(319 1666)">
          <SketchShape />
        </g>
        <g transform="translate(368 1666) scale(.5)">
          <path d="M2 12H38V54H2Z" fill="#6bb1e8" />
          <path d="M2 12L12 0H50L38 12Z" fill="#8acbff" />
          <path d="M38 12L50 0V42L38 54Z" fill="#4a98d3" />
          <path d="M2 56H38L50 44V52L38 64H2Z" fill="#a6a6a6" />
          <path d="M57 8V52" stroke="#222" strokeWidth="2" />
          <path d="M57 1L62 10H52Z" fill="#222" />
        </g>
        <g transform="translate(416 1666) scale(.5)">
          <FilletShape />
        </g>
        <g transform="translate(464 1666) scale(.5)">
          <FilletShape />
        </g>
        <path d="M492 1654H516V1661L506 1673V1718H502V1673L492 1661Z" fill="#606060" />
      </svg>
      <button type="button" aria-label="设置" className="ml-auto">
        <Gear className="size-7 overflow-visible" color="#606060" />
      </button>
    </footer>
  );
}

/* ---------- windows behind the app ---------- */

function Desktop() {
  return (
    <div aria-hidden="true" className="absolute inset-0 overflow-hidden">
      <div className="absolute inset-x-0 top-0 h-3 overflow-hidden border-b border-[#3c3c3c] bg-[#5a5a5a]">
        <span className="absolute top-[3px] left-[780px] font-['Inter',sans-serif] text-[26px] leading-7 font-bold whitespace-nowrap text-[#b4b4b4]">
          Adobe Photoshop 2026
        </span>
        <div className="absolute inset-y-0 right-0 w-[420px] bg-[#e7bf3c]">
          <svg viewBox="0 0 420 12" className="h-3 w-[420px]">
            <path d="M0 0H42L36 8H0ZM50 0H177L170 8H54ZM212 0H323L316 8H220ZM348 0H420V8H350Z" fill="#0a0a0a" />
          </svg>
        </div>
      </div>
      <div className="absolute inset-x-0 top-3 h-[175px] bg-linear-to-b from-[#e9e8e4] to-[#cfcec9]" />
      <div className="absolute top-3 left-0 h-[175px] w-[81px] border-r border-[#c4c3bf]" />
      <div className="absolute top-9 left-[1304px] h-4 w-20 rounded-t-xl bg-[#c9c8c4]" />
      <div className="absolute top-9 right-0 h-14 w-[342px] rounded-l-xl border-2 border-r-0 border-[#d2d1cd]" />
      <div className="absolute top-[545px] left-0 h-[45px] w-7 bg-[#2c2b31]" />
      <svg viewBox="0 0 28 6" className="absolute top-[288px] left-0 h-1.5 w-7">
        <path d="M4 1h4v4H4zM13 1h4v4h-4zM23 1h4v4h-4z" fill="#bbb" />
      </svg>
      <span className="absolute top-[1608px] left-0 text-[26px] leading-8 text-[#bbb]">ho</span>

      {/* right edge */}
      <div className="absolute top-[116px] right-0 h-px w-[50px] bg-[#b4b3b0]" />
      <div className="absolute top-[174px] right-0 h-[13px] w-[50px] bg-[#dddde1]" />
      <div className="absolute top-[254px] right-0 h-px w-[50px] bg-[#333]" />
      <div className="absolute top-[343px] right-0 h-[896px] w-[50px] bg-linear-to-r from-[#bdbdbd] to-[#efefef]" />
      <div className="absolute top-[352px] right-2 h-[86px] w-[60px] rounded-lg border-[6px] border-[#d93a20]" />
      <div className="absolute top-[358px] right-0 flex h-[62px] w-[50px] items-center overflow-hidden bg-[#3a3a3a] text-2xl whitespace-nowrap text-[#e6e6e6]">
        ent h
      </div>
      <svg viewBox="0 0 50 60" className="absolute top-[448px] right-0 h-[60px] w-[50px]">
        <path d="M0 28L4 34L11 25" fill="none" stroke="#222" strokeWidth="4" />
        <path d="M27 0V60" stroke="#b5b5b5" strokeWidth="4" />
        <path d="M50 8Q44 12 48 20V48" fill="none" stroke="#333" strokeWidth="4" strokeDasharray="12 5" />
      </svg>
      <div className="absolute top-[1329px] right-0 h-[349px] w-[50px] border-b border-[#aaa] bg-linear-to-r from-[#cfd1d3] to-[#eceff2]" />
      <svg viewBox="0 0 50 190" className="absolute top-[1329px] right-0 h-[190px] w-[50px]">
        <path d="M5 14Q2 14 2 18V21L0 23L2 25V28Q2 32 5 32M14 14Q17 14 17 18V21L19 23L17 25V28Q17 32 14 32M6 23L9 26L14 20" fill="none" stroke="#444" strokeWidth="2" />
        <path d="M33 28Q36 25 36 18Q37 12 42 12Q47 12 47 18V28L50 30H33ZM38 31H44L41 34Z" fill="#444" />
        <path d="M40 6H50V22H40Z" fill="#1d46a8" />
        <path d="M8 53L13 58L18 53M36 62L48 50M36 62V55M36 62H42" fill="none" stroke="#333" strokeWidth="2.5" />
        <path d="M25 42V66" stroke="#bbb" strokeWidth="2" />
        <path d="M0 88H50" stroke="#9db4dc" strokeWidth="2" />
        <path d="M0 178H50" stroke="#b5d4ea" strokeWidth="2" />
        <text x="41" y="19" fill="#fff" className="font-['Inter',sans-serif] text-[13px] font-bold">
          9
        </text>
      </svg>

      {/* bottom edge */}
      <div className="absolute bottom-0 left-[62px] h-[54px] w-px bg-[#2c2c2c]" />
      <div className="absolute bottom-[42px] left-[645px] h-0.5 w-[120px] bg-[#1f55a0]" />
      <div className="absolute bottom-0 left-[103px] h-1 overflow-hidden font-['Liberation_Mono',monospace] text-2xl leading-5 whitespace-pre text-[#aaa]">
        Delta can use draws dose at  12 thread
      </div>
    </div>
  );
}

export default function App() {
  return (
    <div className="relative flex min-h-screen bg-[#161616] pt-[50px] pr-[50px] pb-[54px] pl-7 font-['Noto_Sans','Noto_Sans_CJK_SC',sans-serif] text-[22px] leading-7 text-[#333]">
      <Desktop />
      <main className="relative flex min-w-0 flex-1 flex-col overflow-hidden rounded-[22px] bg-[#f1f1f1] shadow-[0_0_30px_rgba(0,0,0,0.45)]">
        <TitleBar />
        <TabBar />
        <Ribbon />

        <div className="relative flex flex-1 justify-between overflow-hidden bg-white pt-2 pl-2">
          <ModelCanvas />

          {/* in-canvas distance field */}
          <div className="absolute top-[652px] right-[662px] flex h-11 w-[220px] items-center bg-[#f1f1f1] pl-2">
            <div className="h-9 w-2 bg-[repeating-conic-gradient(#d0d0d0_0_25%,#f1f1f1_0_50%)] bg-[length:4px_4px]" />
            <div className="ml-1 h-10 w-0.5 bg-[#c4c4c4]" />
            <input aria-label="距离" defaultValue="20 mm" className="ml-1.5 h-10 w-[190px] border-2 border-[#ccc] bg-white pl-9 text-[22px] outline-none" />
          </div>

          <aside className="relative flex w-[600px] flex-col justify-between pb-2">
            <div>
              <div className="flex h-[49px] items-center border border-r-2 border-b-2 border-[#ccc] bg-[#f1f1f1] pr-[22px] pl-2 text-[#555]">
                <button type="button" aria-label="收起浏览器">
                  <svg viewBox="0 0 22 14" className="h-3.5 w-[22px]">
                    <path d="M11 0V14L1 7ZM21 0V14L11 7Z" fill="#333" />
                  </svg>
                </button>
                <h2 className="mr-auto ml-[18px]">浏览器</h2>
                <CircleButton sign="minus" name="折叠浏览器" />
              </div>
              <ul className="mt-2.5 flex flex-col gap-2 whitespace-nowrap">
                {TREE.map((item) => (
                  <TreeRow key={item.label} item={item} />
                ))}
              </ul>
            </div>
            <div className="flex h-[50px] items-center border border-r-2 border-b-2 border-[#ccc] bg-[#f1f1f1] pr-[22px] pl-12 text-[#555]">
              <h2 className="mr-auto">注释</h2>
              <CircleButton sign="plus" name="添加注释" />
            </div>
          </aside>

          <NavBar />

          <div className="relative flex flex-col items-end pr-2">
            <ViewCube />
            <HoleDialog />
            <p className="flex h-[60px] items-center pt-2 pr-8 text-[23px] font-bold">1 面 | 区域 : 62.283 mm^2</p>
          </div>
        </div>

        <div className="h-1.5 border-t-4 border-[#cacaca] bg-[#dedede]" />
        <Timeline />
      </main>
    </div>
  );
}
